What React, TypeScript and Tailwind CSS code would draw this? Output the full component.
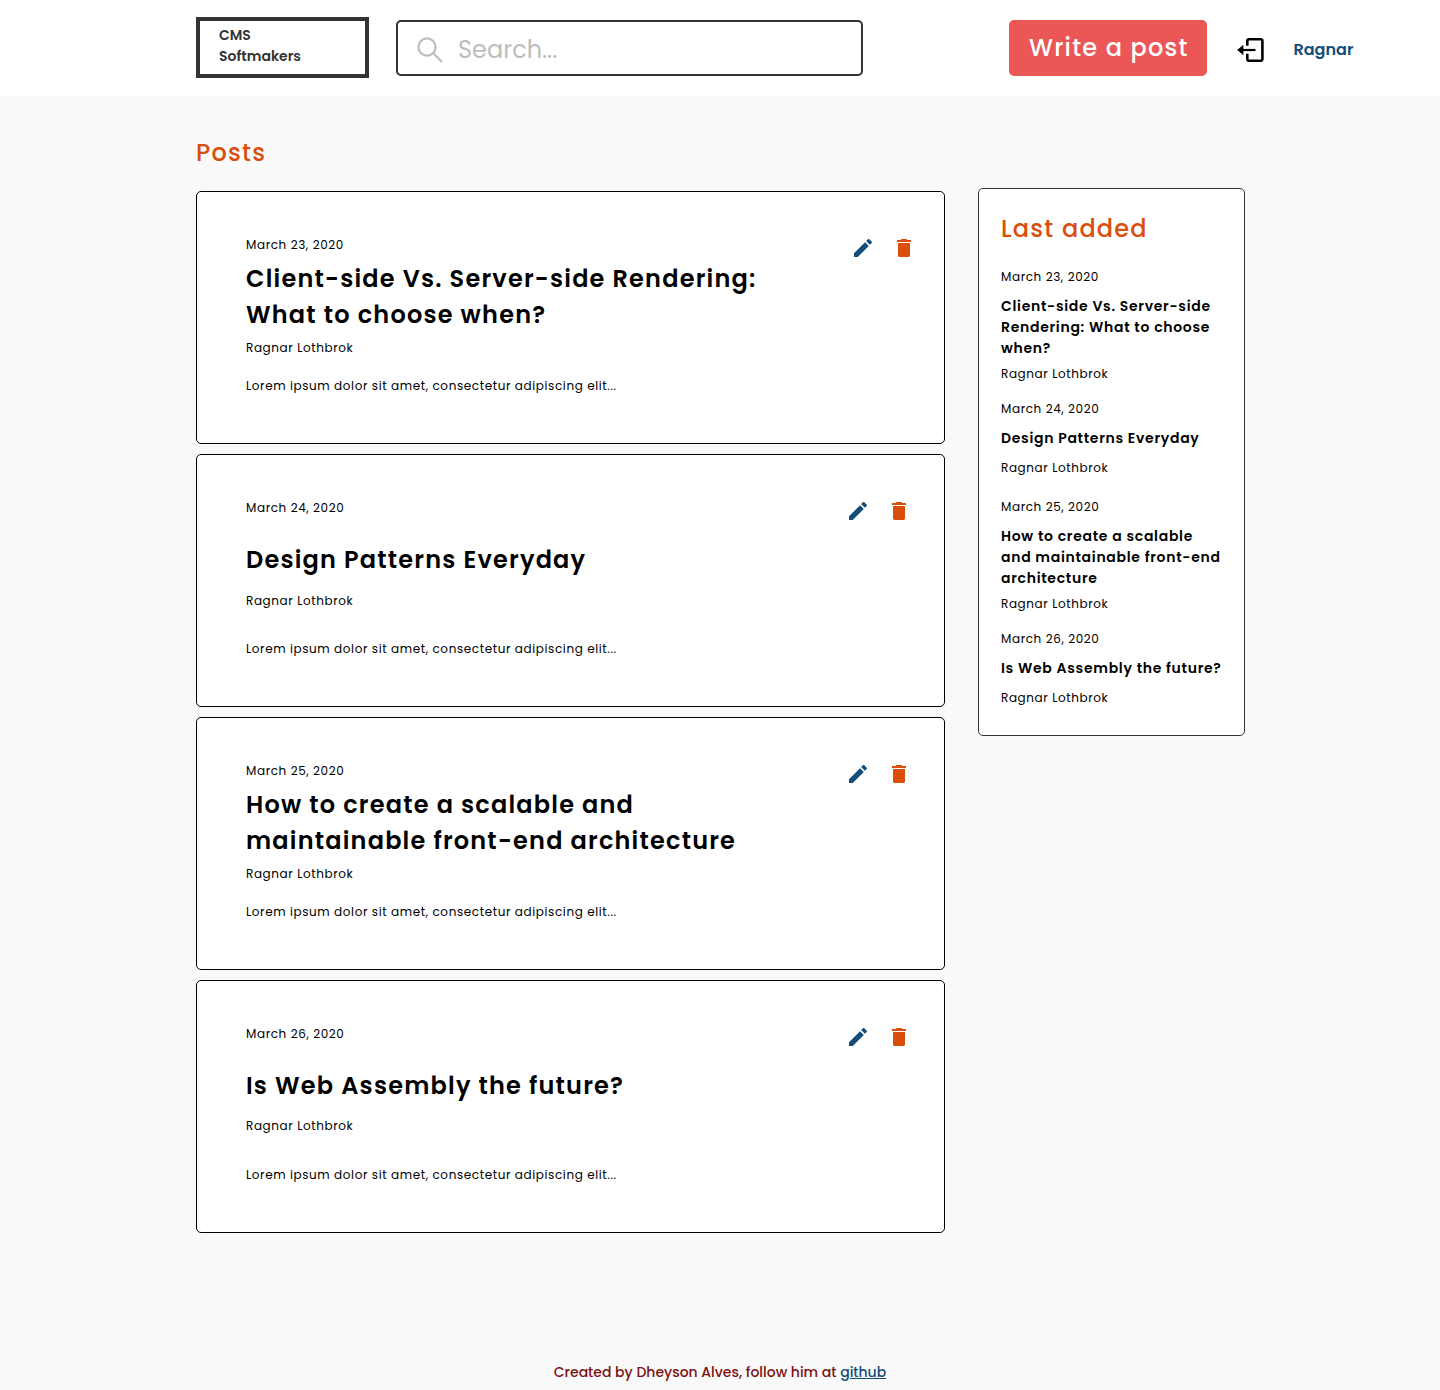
import { MdEdit } from "react-icons/md";

type Post = {
  date: string;
  title: string[];
  sideTitle: string[];
  iconOffset: string;
  authorGap: string;
  excerptGap: string;
};

const posts: Post[] = [
  {
    date: "March 23, 2020",
    title: ["Client-side Vs. Server-side Rendering:", "What to choose when?"],
    sideTitle: ["Client-side Vs. Server-side", "Rendering: What to choose", "when?"],
    iconOffset: "mr-[28px]",
    authorGap: "mt-1.5",
    excerptGap: "mt-5",
  },
  {
    date: "March 24, 2020",
    title: ["Design Patterns Everyday"],
    sideTitle: ["Design Patterns Everyday"],
    iconOffset: "mr-[33px]",
    authorGap: "-mt-1",
    excerptGap: "mt-[30px]",
  },
  {
    date: "March 25, 2020",
    title: ["How to create a scalable and", "maintainable front-end architecture"],
    sideTitle: ["How to create a scalable", "and maintainable front-end", "architecture"],
    iconOffset: "mr-[33px]",
    authorGap: "mt-1.5",
    excerptGap: "mt-5",
  },
  {
    date: "March 26, 2020",
    title: ["Is Web Assembly the future?"],
    sideTitle: ["Is Web Assembly the future?"],
    iconOffset: "mr-[33px]",
    authorGap: "-mt-[5px]",
    excerptGap: "mt-[31px]",
  },
];

function SearchIcon() {
  return (
    <svg width="28" height="28" viewBox="0 0 28 28" fill="none" stroke="#bdbdbd" strokeWidth="2.2">
      <circle cx="11" cy="11" r="8.6" />
      <path d="M17 17 L26 26" />
    </svg>
  );
}

function LogoutIcon() {
  return (
    <svg width="28" height="26" viewBox="0 0 28 26" fill="none" stroke="#000" strokeWidth="2.6">
      <path d="M10.3 8.700V4a1.8 1.8 0 0 1 1.8-1.8h11.5A1.8 1.8 0 0 1 25.400 4v18a1.8 1.8 0 0 1-1.8 1.8H12.1A1.8 1.8 0 0 1 10.3 22v-5.200" />
      <path d="M5 13h13.500" strokeWidth="2.2" />
      <path d="M0.200 13 6.400 7.800v10.400z" fill="#000" stroke="none" />
    </svg>
  );
}

function TrashIcon() {
  return (
    <svg width="24" height="24" viewBox="0 0 24 24" fill="#d94e0b">
      <path d="M19 4h-3.500l-1-1h-5l-1 1H5v2h14z" />
      <path d="M6 7h12v12.600a1.400 1.400 0 0 1-1.400 1.400H7.400A1.400 1.400 0 0 1 6 19.600z" />
    </svg>
  );
}

function Header() {
  return (
    <header className="flex h-24 items-start bg-white pl-[196px]">
      <div className="mt-[17px] h-[61px] w-[173px] border-4 border-[#333] pt-1 pl-[19px] text-sm leading-[21px] font-semibold text-[#333]">
        <span className="block w-fit">CMS</span>
        <span className="block w-fit">Softmakers</span>
      </div>
      <div className="mt-5 ml-[27px] flex h-14 w-[467px] items-center rounded-[5px] border-2 border-[#333] pt-1 pl-[18px] text-2xl text-[#bdbdbd]">
        <SearchIcon />
        <span className="ml-3.5">Search...</span>
      </div>
      <button className="mt-5 ml-[146px] h-14 w-[198px] rounded-[5px] bg-[#eb5757] pl-5 text-left text-2xl font-medium tracking-[1.2px] whitespace-nowrap text-white">
        <span>Write a post</span>
      </button>
      <div className="mt-[37px] ml-[30px]">
        <LogoutIcon />
      </div>
      <span className="mt-[38px] ml-[28.5px] text-base leading-6 font-semibold text-[#134d78]">Ragnar</span>
    </header>
  );
}

function PostCard({ post }: { post: Post }) {
  return (
    <article className="flex h-[253px] justify-between rounded-[5px] border border-black bg-white pt-11 pl-[49px] text-xs leading-[18px] tracking-[0.6px] whitespace-nowrap">
      <div className="flex flex-col">
        <span className="w-fit">{post.date}</span>
        <h2 className="mt-[7px] flex h-[72px] flex-col justify-center text-2xl leading-9 font-semibold tracking-[1.2px]">
          {post.title.map((line) => (
            <span key={line} className="w-fit">{line}</span>
          ))}
        </h2>
        <span className={"w-fit " + post.authorGap}>Ragnar Lothbrok</span>
        <p className={"w-fit " + post.excerptGap}>Lorem ipsum dolor sit amet, consectetur adipiscing elit...</p>
      </div>
      <div className={"flex gap-[17px] " + post.iconOffset}>
        <MdEdit size={24} color="#134d78" />
        <TrashIcon />
      </div>
    </article>
  );
}

function LastAdded() {
  return (
    <aside className="mt-[92px] ml-[33px] h-[548px] w-[267px] rounded-[5px] border border-[#333] bg-white pt-[22px] pl-[22px] text-xs leading-[18px] tracking-[0.6px] whitespace-nowrap">
      <h2 className="mb-[21px] w-fit text-2xl leading-9 font-medium tracking-[1.2px] text-[#d94e0b]">Last added</h2>
      {posts.map((post) => {
        const short = post.sideTitle.length === 1;
        return (
          <div key={post.date} className={short ? "mb-[21px]" : "mb-[17px]"}>
            <span className="block w-fit">{post.date}</span>
            <h3 className="mt-2.5 text-sm leading-[21px] font-semibold tracking-[0.7px]">
              {post.sideTitle.map((line) => (
                <span key={line} className="block w-fit">{line}</span>
              ))}
            </h3>
            <span className={short ? "mt-2.5 block w-fit" : "mt-1.5 block w-fit"}>Ragnar Lothbrok</span>
          </div>
        );
      })}
    </aside>
  );
}

export default function App() {
  return (
    <div className="flex h-[1390px] w-[1440px] flex-col bg-[#f9f9f9] font-['Poppins',Inter,sans-serif] text-black">
      <Header />
      <main className="flex items-start pl-[196px]">
        <section className="w-[749px] pt-[39px]">
          <h1 className="mb-5 w-fit text-2xl leading-9 font-medium tracking-[1.2px] text-[#d94e0b]">Posts</h1>
          <div className="flex flex-col gap-2.5">
            {posts.map((post) => (
              <PostCard key={post.date} post={post} />
            ))}
          </div>
        </section>
        <LastAdded />
      </main>
      <footer className="mt-auto flex h-[28px] justify-center text-sm leading-[21px] font-medium whitespace-pre text-[#7b1010]">
        <span>Created by Dheyson Alves, follow him at </span>
        <a className="h-fit text-[#134d78] underline" href="#">github</a>
      </footer>
    </div>
  );
}
